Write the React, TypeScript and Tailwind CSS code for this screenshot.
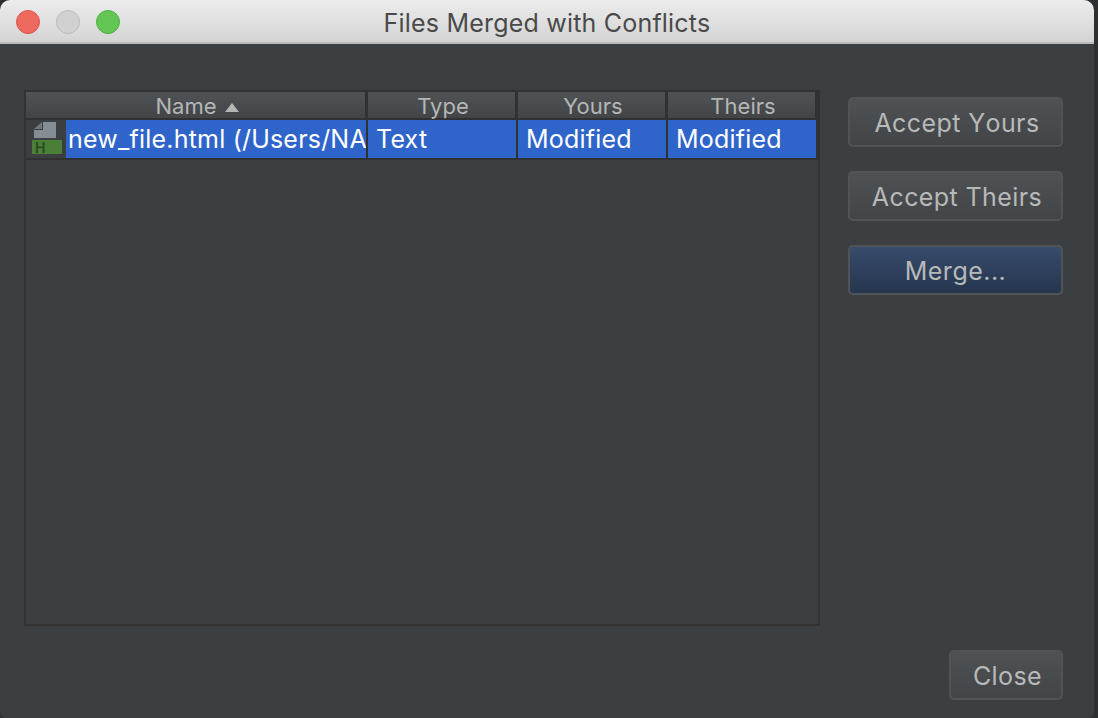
const sans = "font-['Inter','Liberation_Sans',Arial,sans-serif]";

function HeaderCell({ label, className, sort }: { label: string; className: string; sort?: boolean }) {
  return (
    <div className={`flex h-[26px] items-center justify-center gap-[8px] border-r-[3px] border-[#2f3132] pl-[3px] pt-[2px] text-[22px] text-[#b4b6b6] ${className}`}>
      <span>{label}</span>
      {sort && (
        <svg width="14" height="9" viewBox="0 0 14 9" className="mt-[3px]">
          <path d="M7 0 L14 9 L0 9 Z" fill="#b5b7b7" />
        </svg>
      )}
    </div>
  );
}

function DialogButton({ label, primary, className }: { label: string; primary?: boolean; className?: string }) {
  const fill = primary
    ? "bg-gradient-to-b from-[#374b6b] to-[#26364f]"
    : "bg-gradient-to-b from-[#4e5254] to-[#424547] pl-[3px]";
  return (
    <button className={`flex h-[50px] items-center justify-center rounded-[5px] border-2 border-[#515456] pt-[3px] text-[25px] tracking-[0.4px] text-[#b8b9b9] [font-kerning:none] ${fill} ${className ?? ""}`}>
      {label}
    </button>
  );
}

function FileIcon() {
  return (
    <div className="flex w-[40px] shrink-0 flex-col items-start pl-[6px] pt-[2px]">
      <svg width="22" height="16" viewBox="0 0 22 16" className="ml-[2px]">
        <path d="M0 7 L8 0 L8 7 Z" fill="#6f787f" />
        <path d="M9 0 L22 0 L22 16 L0 16 L0 8 L9 8 Z" fill="#848d94" />
      </svg>
      <div className="mt-[2px] h-[14px] w-[30px] bg-[#4a7f37] pl-[3px] text-[14px] font-semibold leading-[16px] text-[#28491e]">H</div>
    </div>
  );
}

export default function App() {
  return (
    <div className={`h-[718px] w-[1098px] overflow-hidden bg-[#2e2f30] ${sans}`}>
      <div className="flex h-[718px] w-[1094px] flex-col overflow-hidden rounded-t-[10px] rounded-b-[6px] bg-[#3c3f41]">
        {/* title bar */}
        <div className="relative flex h-[44px] shrink-0 items-center justify-center border-b-2 border-[#b9b9b9] bg-gradient-to-b from-[#ececec] to-[#d4d4d4]">
          <div className="absolute left-[16px] top-[10px] flex gap-[16px]">
            <span className="h-[24px] w-[24px] rounded-full border border-[#e0554e] bg-[#ee6a5e]" />
            <span className="h-[24px] w-[24px] rounded-full border border-[#bcbcbc] bg-[#d1d1d1]" />
            <span className="h-[24px] w-[24px] rounded-full border border-[#4db241] bg-[#62c554]" />
          </div>
          <span className="mt-[4px] text-[25px] leading-none tracking-[0.2px] text-[#4a4a4a]">Files Merged with Conflicts</span>
        </div>

        <div className="flex flex-1 pl-[24px] pr-[31px] pt-[46px]">
          {/* conflicts table */}
          <div className="h-[536px] w-[796px] shrink-0 border-2 border-[#323233]">
            <div className="flex h-[28px] border-b-2 border-[#2f3132] bg-gradient-to-b from-[#505356] to-[#424547]">
              <HeaderCell label="Name" sort className="w-[342px]" />
              <HeaderCell label="Type" className="w-[150px]" />
              <HeaderCell label="Yours" className="w-[150px]" />
              <HeaderCell label="Theirs" className="w-[150px]" />
            </div>
            <div className="flex h-[40px] border-b-2 border-[#2f3132] text-[25px] tracking-[0.2px] text-white">
              <FileIcon />
              <div className="w-[302px] overflow-hidden whitespace-nowrap border-r-2 border-[#2f3132] bg-[#2f65ca] pl-[2px] leading-[38px]">
                new_file.html (/Users/NAME)
              </div>
              <div className="w-[150px] border-r-2 border-[#2f3132] bg-[#2f65ca] pl-[8px] leading-[38px]">Text</div>
              <div className="w-[150px] border-r-2 border-[#2f3132] bg-[#2f65ca] pl-[8px] leading-[38px]">Modified</div>
              <div className="w-[150px] border-r-2 border-[#2f3132] bg-[#2f65ca] pl-[8px] leading-[38px]">Modified</div>
            </div>
          </div>

          {/* actions */}
          <div className="ml-[28px] flex flex-1 flex-col">
            <div className="flex flex-col gap-[24px] pt-[7px]">
              <DialogButton label="Accept Yours" />
              <DialogButton label="Accept Theirs" />
              <DialogButton label="Merge..." primary />
            </div>
            <DialogButton label="Close" className="ml-auto mt-[355px] w-[114px]" />
          </div>
        </div>
      </div>
    </div>
  );
}
